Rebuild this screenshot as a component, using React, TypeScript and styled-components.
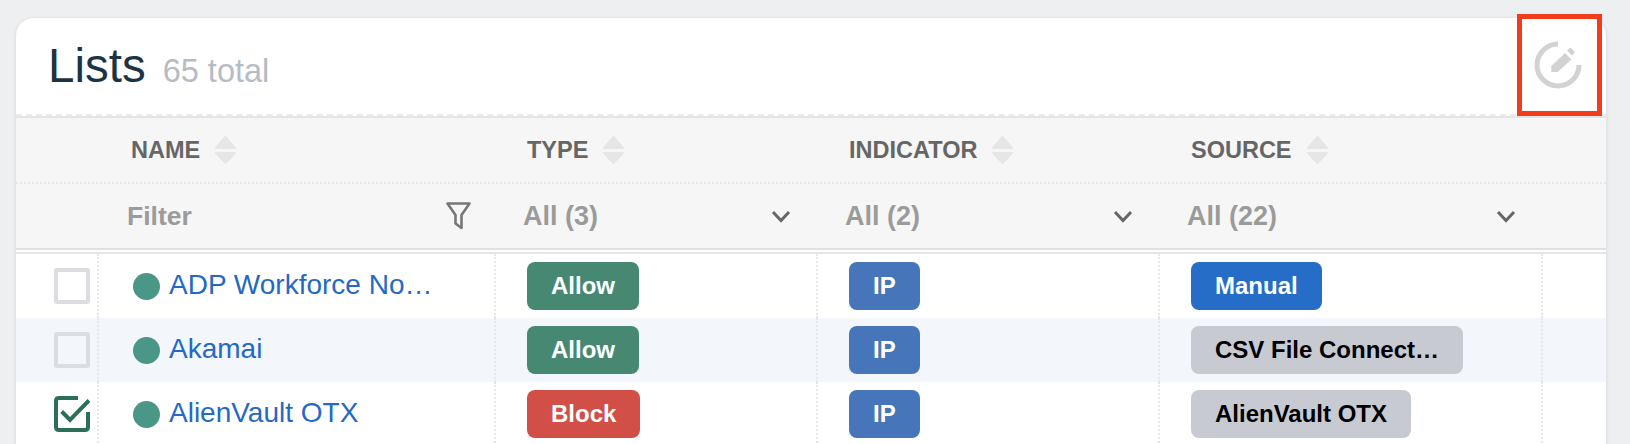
import { createGlobalStyle, styled } from "styled-components";

const GlobalStyle = createGlobalStyle`
  html, body {
    margin: 0;
    height: 444px;
    overflow: hidden;
    background: #eeeff1;
    font-family: "Liberation Sans", Arial, sans-serif;
  }
`;

const COLUMNS = "81px 397px 322px 342px 383px 65px";

const Card = styled.section`
  margin: 18px 24px 0 16px;
  height: 440px;
  background: #fff;
  border-radius: 18px 18px 0 0;
  box-shadow: 0 1px 4px rgba(0, 0, 0, 0.12);
`;

const CardHeader = styled.header`
  position: relative;
  height: 98px;
  padding-left: 32px;
  display: flex;
  align-items: baseline;
  gap: 17px;
  border-bottom: 2px dashed #ebebeb;
  box-sizing: border-box;
`;

const Title = styled.h1`
  margin: 0;
  font-size: 47.5px;
  line-height: 96px;
  font-weight: 400;
  color: #1c3344;
`;

const Total = styled.span`
  font-size: 32.5px;
  color: #b5bcc5;
`;

const Highlight = styled.div`
  position: absolute;
  top: -4px;
  right: 4px;
  width: 85px;
  height: 102px;
  box-sizing: border-box;
  border: 5px solid #f33c1e;
  padding-right: 4px;
  display: flex;
  align-items: center;
  justify-content: center;
`;

const TableHead = styled.div`
  background: #f6f6f6;
  border-top: 2px solid #e5e5e5;
  border-bottom: 2px solid #e0e0e0;
`;

const HeadRow = styled.div`
  display: grid;
  grid-template-columns: ${COLUMNS};
  height: 66px;
  align-items: center;
  border-bottom: 2px dotted #e8e8e8;
  box-sizing: border-box;
`;

const FilterRow = styled.div`
  display: grid;
  grid-template-columns: ${COLUMNS};
  height: 64px;
  align-items: center;
`;

const HeadCell = styled.div`
  display: flex;
  align-items: center;
  gap: 15px;
  padding-left: 33px;
  font-size: 23.5px;
  font-weight: 700;
  color: #666;
`;

const NameHeadCell = styled(HeadCell)`
  padding-left: 34px;
`;

const FilterCell = styled.div`
  display: flex;
  align-items: center;
  justify-content: space-between;
  padding-left: 29px;
  padding-right: 25px;
  font-size: 27px;
  font-weight: 700;
  color: #9b9b9b;
`;

const NameFilterCell = styled(FilterCell)`
  padding-left: 30px;
  padding-right: 23px;
  font-size: 26.5px;
`;

const HeadGap = styled.div`
  height: 2px;
  background: #fff;
  border-bottom: 2px solid #e5e5e5;
`;

const BodyRow = styled.div<{ $striped?: boolean }>`
  display: grid;
  grid-template-columns: ${COLUMNS};
  height: 64px;
  background: ${(p) => (p.$striped ? "#f3f6fb" : "#fff")};
`;

const Cell = styled.div`
  display: flex;
  align-items: center;
  min-width: 0;
  padding-left: 31px;
  border-left: 2px dotted #e6e7ea;
  box-sizing: border-box;
`;

const CheckCell = styled.div`
  display: flex;
  align-items: center;
  padding-left: 38px;
`;

const Checkbox = styled.span`
  display: block;
  width: 36px;
  height: 36px;
  box-sizing: border-box;
  border: 4px solid #dcdde1;
  border-radius: 3px;
`;

const NameCell = styled(Cell)`
  padding-left: 34px;
  gap: 9px;
`;

const StatusDot = styled.span`
  flex: none;
  width: 27px;
  height: 27px;
  border-radius: 50%;
  background: #4a9687;
`;

const NameLink = styled.a`
  padding-bottom: 3px;
  font-size: 28px;
  color: #2569c3;
  white-space: nowrap;
`;

const Badge = styled.span<{ $bg: string; $fg?: string }>`
  display: block;
  height: 48px;
  padding: 0 24px;
  box-sizing: border-box;
  border-radius: 8px;
  background: ${(p) => p.$bg};
  color: ${(p) => p.$fg ?? "#fff"};
  font-size: 24px;
  font-weight: 700;
  line-height: 48px;
  white-space: nowrap;
`;

const SortIcon = () => (
  <svg width="21" height="28" viewBox="0 0 21 28" fill="#e6e6e6" stroke="#e6e6e6" strokeWidth="2" strokeLinejoin="round">
    <path d="M10.5 1 L20 12 H1 Z" />
    <path d="M1 17 H20 L10.5 27 Z" />
  </svg>
);

const FunnelIcon = () => (
  <svg width="25" height="28" viewBox="0 0 25 28" fill="none" stroke="#777" strokeWidth="2.6" strokeLinejoin="round">
    <path d="M1.5 1.5 H23.5 L15.5 13 V26 L9.5 21.5 V13 Z" />
  </svg>
);

const Chevron = () => (
  <svg width="20" height="13" viewBox="0 0 20 13" fill="none" stroke="#666" strokeWidth="3">
    <path d="M2 2 L10 10.5 L18 2" />
  </svg>
);

const EditIcon = () => (
  <svg width="48" height="48" viewBox="0 0 48 48" fill="none">
    <path d="M24 3 A21 21 0 1 0 45 24" stroke="#d2d2d2" strokeWidth="5" />
    <path d="M17.3 25 L31 12 L37.5 18.5 L23.5 31 H17.3 Z M33 9.8 L36.3 6.5 L41 11 L37.8 14.6 Z" fill="#d2d2d2" />
  </svg>
);

const CheckedBox = () => (
  <svg width="36" height="36" viewBox="0 0 36 36" fill="none" stroke="#2b6e5a" strokeWidth="4">
    <path d="M24 2 H5 Q2 2 2 5 V31 Q2 34 5 34 H31 Q34 34 34 31 V16" />
    <path d="M7.7 15.5 L16 24 L35 4.5" />
  </svg>
);

const GRAY = "#c8cad2";

const rows = [
  { name: "ADP Workforce No…", type: "Allow", source: "Manual", sourceBg: "#266dc7", sourceFg: "#fff", checked: false },
  { name: "Akamai", type: "Allow", source: "CSV File Connect…", sourceBg: GRAY, sourceFg: "#000", checked: false },
  { name: "AlienVault OTX", type: "Block", source: "AlienVault OTX", sourceBg: GRAY, sourceFg: "#000", checked: true },
];

export default function App() {
  return (
    <>
      <GlobalStyle />
      <Card>
        <CardHeader>
          <Title>Lists</Title>
          <Total>65 total</Total>
          <Highlight>
            <EditIcon />
          </Highlight>
        </CardHeader>
        <TableHead>
          <HeadRow>
            <div />
            <NameHeadCell>
              NAME <SortIcon />
            </NameHeadCell>
            <HeadCell>
              TYPE <SortIcon />
            </HeadCell>
            <HeadCell>
              INDICATOR <SortIcon />
            </HeadCell>
            <HeadCell>
              SOURCE <SortIcon />
            </HeadCell>
          </HeadRow>
          <FilterRow>
            <div />
            <NameFilterCell>
              Filter <FunnelIcon />
            </NameFilterCell>
            <FilterCell>
              All (3) <Chevron />
            </FilterCell>
            <FilterCell>
              All (2) <Chevron />
            </FilterCell>
            <FilterCell>
              All (22) <Chevron />
            </FilterCell>
          </FilterRow>
        </TableHead>
        <HeadGap />
        {rows.map((row, i) => (
          <BodyRow key={row.name} $striped={i % 2 === 1}>
            <CheckCell>{row.checked ? <CheckedBox /> : <Checkbox />}</CheckCell>
            <NameCell>
              <StatusDot />
              <NameLink>{row.name}</NameLink>
            </NameCell>
            <Cell>
              <Badge $bg={row.type === "Allow" ? "#478873" : "#d24f47"}>{row.type}</Badge>
            </Cell>
            <Cell>
              <Badge $bg="#4676b9">IP</Badge>
            </Cell>
            <Cell>
              <Badge $bg={row.sourceBg} $fg={row.sourceFg}>
                {row.source}
              </Badge>
            </Cell>
            <Cell />
          </BodyRow>
        ))}
      </Card>
    </>
  );
}
